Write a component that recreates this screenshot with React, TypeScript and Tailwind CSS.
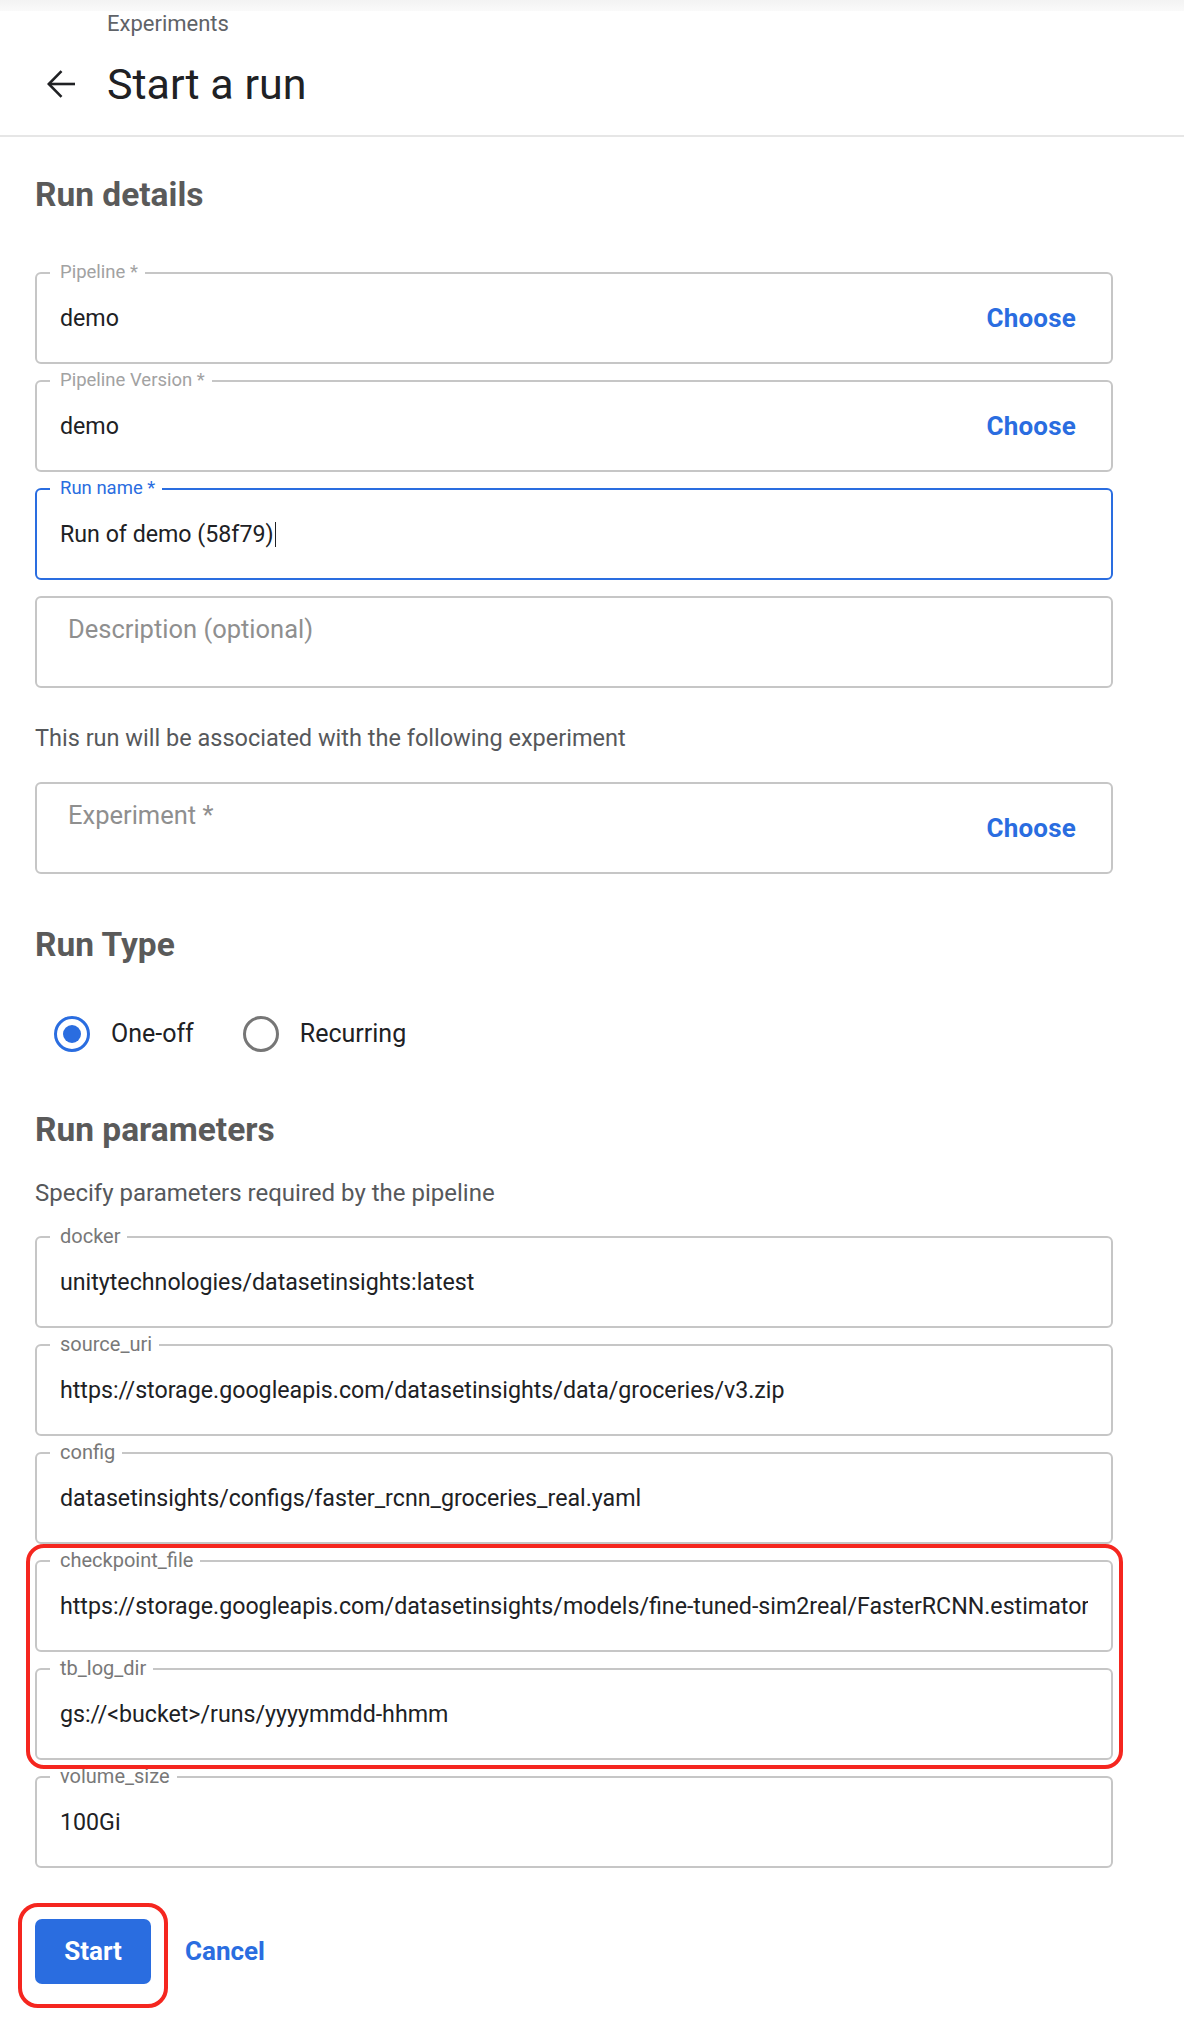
import React from "react";
import clsx from "clsx";

type FieldProps = {
  label?: string;
  value?: string;
  placeholder?: string;
  focused?: boolean;
  faint?: boolean;
  choose?: boolean;
  caret?: boolean;
};

function ChooseButton() {
  return (
    <button
      type="button"
      className="shrink-0 text-[26px] font-bold leading-[30px] tracking-[0.2px] text-[#2a6de0]"
    >
      Choose
    </button>
  );
}

function OutlinedField({ label, value, placeholder, focused, faint, choose, caret }: FieldProps) {
  return (
    <div
      className={clsx(
        "relative h-[92px] rounded-[6px] border-2 bg-white",
        focused ? "border-[#2a6de0]" : "border-[#c6c6c6]"
      )}
    >
      {label && (
        <span
          className={clsx(
            "absolute left-[13px] top-[-13px] bg-white pl-[10px] pr-[7px] leading-[22px]",
            focused
              ? "text-[18.5px] text-[#2a6de0]"
              : faint
                ? "text-[18.5px] text-[#a2a2a2]"
                : "text-[20px] text-[#787878]"
          )}
        >
          {label}
        </span>
      )}
      {placeholder ? (
        <div className="flex h-full items-start justify-between pl-[31px] pr-[35px] pt-[15px]">
          <span className="text-[25.5px] leading-[32px] text-[#8f8f8f]">{placeholder}</span>
          {choose && (
            <div className="flex h-[58px] items-center">
              <ChooseButton />
            </div>
          )}
        </div>
      ) : (
        <div
          className={clsx(
            "flex h-full items-center justify-between pl-[23px]",
            choose ? "pr-[35px]" : "pr-[23px]"
          )}
        >
          <span className="min-w-0 flex-1 overflow-hidden whitespace-nowrap text-[23.2px] leading-[28px] text-[#202124]">
            {value}
            {caret && (
              <span className="ml-[1px] inline-block h-[25px] w-[1.5px] bg-[#202124] align-[-5px]" />
            )}
          </span>
          {choose && <ChooseButton />}
        </div>
      )}
    </div>
  );
}

function SectionTitle({ children }: { children: React.ReactNode }) {
  return (
    <h2 className="text-[33.5px] font-bold leading-[40px] text-[#5a5a5a]">{children}</h2>
  );
}

export default function App() {
  return (
    <div className="min-h-[2020px] bg-white font-['Roboto',_'Liberation_Sans',_sans-serif]">
      <div className="h-[11px] bg-gradient-to-b from-[#f3f3f3] to-[#fafafa]" />

      <header className="border-b-2 border-[#e6e6e6] pb-[25px] pl-[47px]">
        <div className="pl-[60px] text-[22px] leading-[26px] text-[#5f6368]">Experiments</div>
        <div className="mt-[21px] flex h-[52px] items-center">
          <svg
            width="28"
            height="28"
            viewBox="0 0 28 28"
            fill="none"
            stroke="#202124"
            strokeWidth="2.6"
            className="shrink-0"
          >
            <path d="M14.5 1.2 L1.8 14 L14.5 26.8" />
            <path d="M1.8 14 H28" />
          </svg>
          <h1 className="ml-[32px] text-[43px] font-normal leading-[52px] text-[#202124]">
            Start a run
          </h1>
        </div>
      </header>

      <main className="pb-[37px] pl-[35px] pr-[71px]">
        <div className="mt-[38px]">
          <SectionTitle>Run details</SectionTitle>
        </div>

        <div className="mt-[57px] flex flex-col gap-[16px]">
          <OutlinedField label="Pipeline *" value="demo" faint choose />
          <OutlinedField label="Pipeline Version *" value="demo" faint choose />
          <OutlinedField label="Run name *" value="Run of demo (58f79)" focused caret />
          <OutlinedField placeholder="Description (optional)" />
        </div>

        <p className="mt-[36px] text-[23.5px] leading-[28px] text-[#56585b]">
          This run will be associated with the following experiment
        </p>

        <div className="mt-[30px]">
          <OutlinedField placeholder="Experiment *" choose />
        </div>

        <div className="mt-[51px]">
          <SectionTitle>Run Type</SectionTitle>
        </div>

        <div className="mt-[45px] flex h-[48px] items-center pl-[19px]">
          <span className="flex h-[36px] w-[36px] items-center justify-center rounded-full border-[3.5px] border-[#2a6de0]">
            <span className="h-[18px] w-[18px] rounded-full bg-[#2a6de0]" />
          </span>
          <span className="ml-[21px] text-[25px] leading-[30px] text-[#202124]">One-off</span>
          <span className="ml-[49px] h-[36px] w-[36px] rounded-full border-[3.5px] border-[#767676]" />
          <span className="ml-[21px] text-[25px] leading-[30px] text-[#202124]">Recurring</span>
        </div>

        <div className="mt-[52px]">
          <SectionTitle>Run parameters</SectionTitle>
        </div>

        <p className="mt-[29px] text-[24px] leading-[28px] text-[#56585b]">
          Specify parameters required by the pipeline
        </p>

        <div className="mt-[29px] flex flex-col gap-[16px]">
          <OutlinedField label="docker" value="unitytechnologies/datasetinsights:latest" />
          <OutlinedField
            label="source_uri"
            value="https://storage.googleapis.com/datasetinsights/data/groceries/v3.zip"
          />
          <OutlinedField
            label="config"
            value="datasetinsights/configs/faster_rcnn_groceries_real.yaml"
          />
          <div className="relative flex flex-col gap-[16px]">
            <OutlinedField
              label="checkpoint_file"
              value="https://storage.googleapis.com/datasetinsights/models/fine-tuned-sim2real/FasterRCNN.estimator_19.pth"
            />
            <OutlinedField label="tb_log_dir" value="gs://<bucket>/runs/yyyymmdd-hhmm" />
            <span className="pointer-events-none absolute -bottom-[9px] -left-[9px] -right-[10px] -top-[16px] z-10 rounded-[18px] border-[4px] border-[#f5261f]" />
          </div>
          <OutlinedField label="volume_size" value="100Gi" />
        </div>

        <div className="mt-[51px] flex items-center">
          <div className="relative">
            <button
              type="button"
              className="h-[65px] w-[116px] rounded-[7px] bg-[#2a6de0] text-[26px] font-bold text-white"
            >
              Start
            </button>
            <span className="pointer-events-none absolute -bottom-[24px] -left-[17px] -right-[17px] -top-[16px] rounded-[20px] border-[4px] border-[#f5261f]" />
          </div>
          <button type="button" className="ml-[34px] text-[26px] font-bold text-[#2a6de0]">
            Cancel
          </button>
        </div>
      </main>
    </div>
  );
}
